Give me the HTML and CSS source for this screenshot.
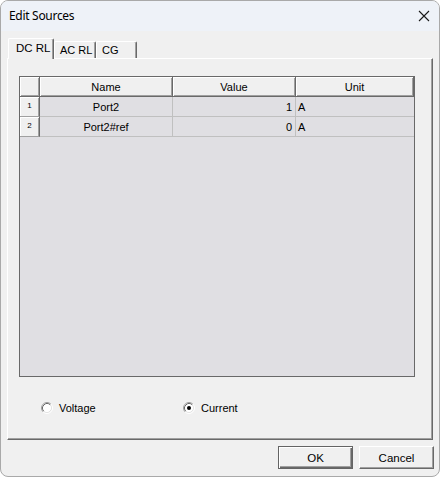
FILE: index.html
```html
<!DOCTYPE html>
<html>
<head>
<meta charset="utf-8">
<link rel="stylesheet" href="styles.css">
</head>
<body>
<div class="window">
  <div class="titlebar">
    <span class="title">Edit Sources</span>
    <svg class="close" width="12" height="12" viewBox="0 0 12 12"><path d="M1 1L11 11M11 1L1 11" stroke="#1a1a1a" stroke-width="1.1" fill="none"/></svg>
  </div>
  <div class="main">
    <div class="tabs">
      <div class="tab active">DC RL</div>
      <div class="tab">AC RL</div>
      <div class="tab wide">CG</div>
    </div>
    <div class="panel">
      <div class="grid">
        <div class="hcell corner"></div>
        <div class="hcell">Name</div>
        <div class="hcell">Value</div>
        <div class="hcell">Unit</div>

        <div class="rowhead">1</div>
        <div class="cell center">Port2</div>
        <div class="cell right">1</div>
        <div class="cell left">A</div>

        <div class="rowhead">2</div>
        <div class="cell center">Port2#ref</div>
        <div class="cell right">0</div>
        <div class="cell left">A</div>
      </div>
      <div class="radios">
        <label class="radio r1">
          <svg width="12" height="12" viewBox="0 0 12 12"><circle cx="6" cy="6" r="4.5" fill="#fff"/><path d="M2.11 9.89A5.5 5.5 0 0 1 9.89 2.11" stroke="#a0a0a0" fill="none"/><path d="M9.89 2.11A5.5 5.5 0 0 1 2.11 9.89" stroke="#ffffff" fill="none"/><path d="M2.82 9.18A4.5 4.5 0 0 1 9.18 2.82" stroke="#696969" fill="none"/><path d="M9.18 2.82A4.5 4.5 0 0 1 2.82 9.18" stroke="#e3e3e3" fill="none"/></svg>
          <span>Voltage</span>
        </label>
        <label class="radio r2">
          <svg width="12" height="12" viewBox="0 0 12 12"><circle cx="6" cy="6" r="4.5" fill="#fff"/><path d="M2.11 9.89A5.5 5.5 0 0 1 9.89 2.11" stroke="#a0a0a0" fill="none"/><path d="M9.89 2.11A5.5 5.5 0 0 1 2.11 9.89" stroke="#ffffff" fill="none"/><path d="M2.82 9.18A4.5 4.5 0 0 1 9.18 2.82" stroke="#696969" fill="none"/><path d="M9.18 2.82A4.5 4.5 0 0 1 2.82 9.18" stroke="#e3e3e3" fill="none"/><circle cx="6" cy="6" r="2" fill="#000"/></svg>
          <span>Current</span>
        </label>
      </div>
    </div>
    <div class="buttons">
      <div class="btn default">OK</div>
      <div class="btn">Cancel</div>
    </div>
  </div>
</div>
</body>
</html>
```
FILE: styles.css
```css
* { box-sizing: border-box; }
html, body { margin: 0; padding: 0; background: #ffffff; }
body { width: 440px; height: 477px; overflow: hidden; }

.window {
  width: 440px;
  height: 477px;
  border: 1px solid #a9a9a9;
  border-radius: 8px;
  overflow: hidden;
  background: #f0f0f0;
  font-family: "Liberation Sans", Arial, sans-serif;
  font-size: 11px;
  color: #000;
}

.titlebar {
  height: 30px;
  background: #eef2f8;
  display: flex;
  align-items: center;
  justify-content: space-between;
  padding: 0 9px 1px 8px;
}
.title {
  font-family: "Noto Sans", sans-serif;
  font-size: 12px;
  letter-spacing: -0.3px;
  color: #000;
}
.close { display: block; }

.main {
  padding: 0 5px 0 6px;
}

.tabs {
  margin-top: 7px;
  height: 20px;
  padding-left: 1px;
  display: flex;
  align-items: flex-end;
  position: relative;
  z-index: 2;
}
.tab {
  height: 17px;
  width: 42px;
  padding-left: 5px;
  line-height: 16px;
  background: #f0f0f0;
  border-top: 1px solid #ffffff;
  border-left: 1px solid #ffffff;
  border-right: 1px solid #696969;
  box-shadow: inset -1px 0 0 #a0a0a0;
  border-radius: 2px 2px 0 0;
  white-space: nowrap;
}
.tab.wide { width: 41px; }
.tab.active {
  height: 21px;
  width: 46px;
  margin-bottom: -1px;
  padding-left: 7px;
  line-height: 19px;
  font-size: 11.5px;
}

.panel {
  width: 426px;
  height: 382px;
  border-top: 1px solid #ffffff;
  border-left: 1px solid #ffffff;
  border-right: 1px solid #696969;
  border-bottom: 1px solid #696969;
  box-shadow: inset -1px -1px 0 #a0a0a0;
  padding: 17px 0 0 11px;
  position: relative;
  z-index: 1;
}

.grid {
  width: 396px;
  height: 301px;
  border: 1px solid #696969;
  background: #e0dfe3;
  display: grid;
  grid-template-columns: 20px 133px 123px 118px;
  grid-auto-rows: 20px;
  align-content: start;
}
.hcell, .rowhead {
  background: #f0f0f0;
  border-right: 1px solid #696969;
  border-bottom: 1px solid #696969;
  box-shadow: inset 1px 1px 0 #ffffff, inset -1px -1px 0 #a0a0a0;
  display: flex;
  align-items: center;
  justify-content: center;
}
.rowhead {
  font-size: 8px;
  padding-bottom: 3px;
  border-bottom: 1px solid #a0a0a0;
  box-shadow: inset 1px 1px 0 #ffffff, inset -1px 0 0 #a0a0a0;
}
.cell {
  border-right: 1px solid #c0c0c0;
  border-bottom: 1px solid #c0c0c0;
  display: flex;
  align-items: center;
  white-space: nowrap;
}
.cell.center { justify-content: center; }
.cell.right { justify-content: flex-end; padding-right: 3px; }
.cell.left { justify-content: flex-start; padding-left: 2px; border-right: none; }

.radios {
  margin-top: 24px;
  height: 14px;
  display: flex;
  align-items: center;
  padding-left: 22px;
}
.radio {
  display: flex;
  align-items: center;
  gap: 6px;
}
.radio svg { display: block; }
.r1 { width: 142px; }

.buttons {
  margin-top: 6px;
  display: flex;
  justify-content: flex-end;
  gap: 6px;
  padding-right: 0;
}
.btn {
  width: 75px;
  height: 23px;
  display: flex;
  align-items: center;
  justify-content: center;
  background: #f0f0f0;
  border-top: 1px solid #ffffff;
  border-left: 1px solid #ffffff;
  border-right: 1px solid #696969;
  border-bottom: 1px solid #696969;
  box-shadow: inset -1px -1px 0 #a0a0a0;
  font-size: 11.5px;
}
.btn.default {
  border: 1px solid #646464;
  box-shadow: inset 1px 1px 0 #ffffff, inset -1px -1px 0 #696969, inset -2px -2px 0 #a0a0a0;
}
```
